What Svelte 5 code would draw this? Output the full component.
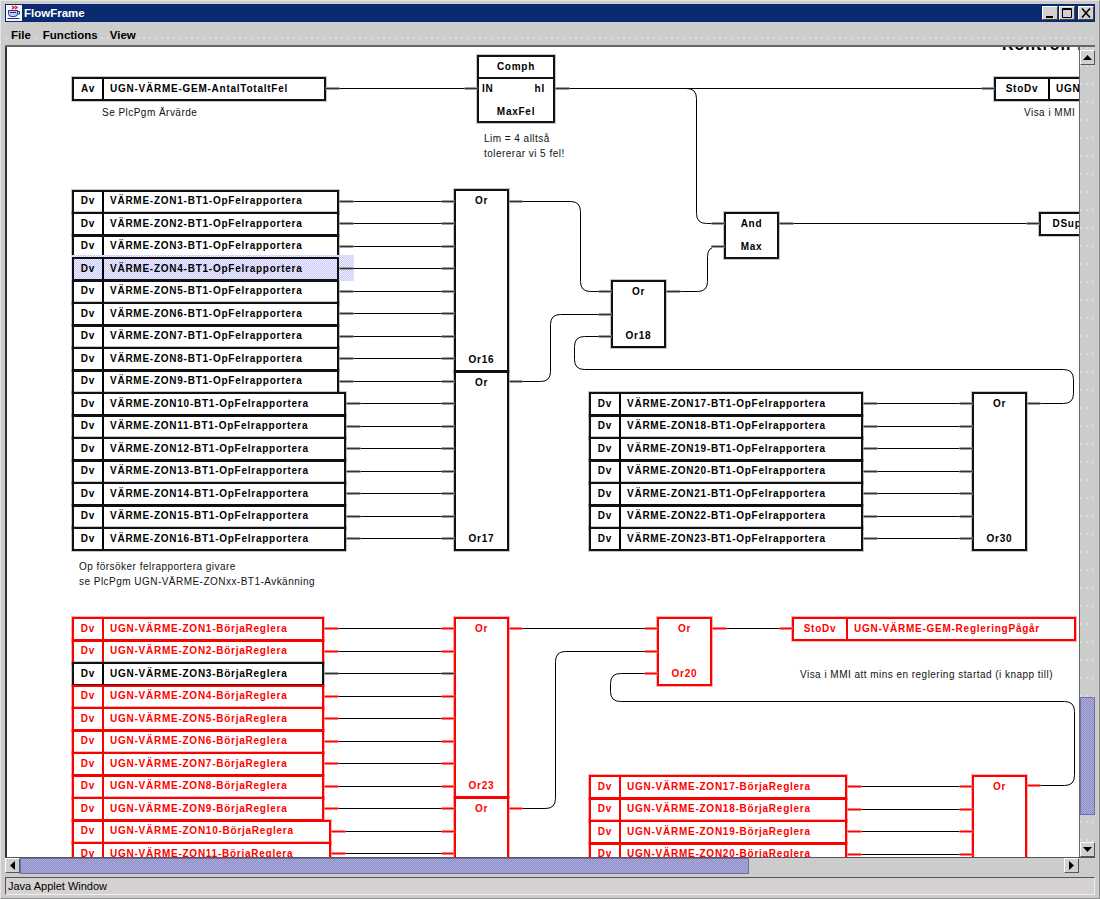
<script lang="ts">
  // the sheet is drawn in page coordinates, this is where the canvas starts
  const ox = 7;
  const oy = 47;

  type Row = { x: number; top: number; w: number; tag: string; name: string; red: boolean; sel?: boolean };

  const pitch = 22.5;
  const rows: Row[] = [];

  function addRows(x: number, top: number, w: number, from: number, to: number, fmt: (n: number) => string, red: boolean) {
    for (let n = from; n <= to; n++) {
      rows.push({ x, top: top + (n - from) * pitch, w, tag: 'Dv', name: fmt(n), red });
    }
  }

  const opFel = (n: number) => `VÄRME-ZON${n}-BT1-OpFelrapportera`;
  const borja = (n: number) => `UGN-VÄRME-ZON${n}-BörjaReglera`;

  addRows(72, 189.5, 267, 1, 9, opFel, false);
  addRows(72, 392, 274, 10, 16, opFel, false);
  addRows(589, 392, 274, 17, 23, opFel, false);
  addRows(72, 617, 252, 1, 9, borja, true);
  addRows(72, 819.5, 259, 10, 11, borja, true);
  addRows(589, 775, 258, 17, 20, borja, true);

  // N4 in the first group is selected, N3 in the red group is the inactive one
  rows[3].sel = true;
  const blackOne = rows.find((r) => r.name === 'UGN-VÄRME-ZON3-BörjaReglera');
  if (blackOne) blackOne.red = false;

  const blocks = [
    { x: 454, y: 189, w: 55, h: 183, top: 'Or', bottom: 'Or16', red: false },
    { x: 454, y: 371, w: 55, h: 180, top: 'Or', bottom: 'Or17', red: false },
    { x: 611, y: 280, w: 55, h: 68, top: 'Or', bottom: 'Or18', red: false },
    { x: 724, y: 212, w: 55, h: 47, top: 'And', bottom: 'Max', red: false },
    { x: 972, y: 392, w: 55, h: 159, top: 'Or', bottom: 'Or30', red: false },
    { x: 454, y: 617, w: 55, h: 181, top: 'Or', bottom: 'Or23', red: true },
    { x: 454, y: 797, w: 55, h: 180, top: 'Or', bottom: '', red: true },
    { x: 657, y: 617, w: 55, h: 69, top: 'Or', bottom: 'Or20', red: true },
    { x: 972, y: 775, w: 55, h: 180, top: 'Or', bottom: '', red: true }
  ];

  const cy = (r: Row) => Math.round(r.top + 11);

  // straight signal from every row into its Or block
  const stubs: { x1: number; x2: number; y: number; red: boolean }[] = [];
  const wires: string[] = [];

  for (const r of rows) {
    const right = r.x + r.w;
    const gateX = r.x === 72 ? 454 : 972;
    const y = cy(r);
    stubs.push({ x1: right, x2: right + 14, y, red: r.red });
    stubs.push({ x1: gateX - 13, x2: gateX, y, red: r.red });
    wires.push(`M${right + 14} ${y}H${gateX - 13}`);
  }

  const extraStubs = [
    { x1: 325, x2: 339, y: 88, red: false },
    { x1: 464, x2: 477, y: 88, red: false },
    { x1: 555, x2: 569, y: 88, red: false },
    { x1: 981, x2: 994, y: 88, red: false },
    { x1: 509, x2: 522, y: 201, red: false },
    { x1: 509, x2: 522, y: 381, red: false },
    { x1: 598, x2: 611, y: 291, red: false },
    { x1: 598, x2: 611, y: 314, red: false },
    { x1: 598, x2: 611, y: 336, red: false },
    { x1: 666, x2: 680, y: 291, red: false },
    { x1: 711, x2: 724, y: 223, red: false },
    { x1: 711, x2: 724, y: 246, red: false },
    { x1: 779, x2: 793, y: 223, red: false },
    { x1: 1026, x2: 1039, y: 223, red: false },
    { x1: 1027, x2: 1040, y: 403, red: false },
    { x1: 509, x2: 522, y: 628, red: true },
    { x1: 509, x2: 522, y: 808, red: true },
    { x1: 644, x2: 657, y: 628, red: true },
    { x1: 644, x2: 657, y: 651, red: true },
    { x1: 644, x2: 657, y: 673, red: true },
    { x1: 712, x2: 726, y: 628, red: true },
    { x1: 779, x2: 792, y: 628, red: true },
    { x1: 1027, x2: 1040, y: 785, red: true }
  ];

  const longWires = [
    'M339 88H464',
    'M569 88H981',
    'M686 88Q696 88 696 98V213Q696 223 706 223H711',
    'M522 201H570Q580 201 580 211V281Q580 291 590 291H598',
    'M598 314H560Q550 314 550 324V371Q550 381 540 381H522',
    'M598 336H584Q574 336 574 346V359Q574 369 584 369H1063Q1073 369 1073 379V393Q1073 403 1063 403H1040',
    'M680 291H697Q707 291 707 281V256Q707 246 717 246H711',
    'M793 223H1026',
    'M522 628H644',
    'M726 628H779',
    'M644 651H565Q555 651 555 661V798Q555 808 545 808H522',
    'M644 673H620Q610 673 610 683V691Q610 701 620 701H1064Q1074 701 1074 711V775Q1074 785 1064 785H1040'
  ];

  const allStubs = [...stubs, ...extraStubs];
</script>

<div class="window">
  <div class="titlebar">
    <svg class="appicon" width="16" height="16" viewBox="0 0 16 16">
      <rect width="16" height="16" fill="#f4f4fa" />
      <path d="M6 1l2 1.500-2 1.500M9 1l2 1.500-2 1.500" fill="none" stroke="#e01010" stroke-width="1.300" />
      <path d="M2.500 5.500h9v3q0 3-3 3h-3q-3 0-3-3z" fill="#c8ccf0" stroke="#20308c" />
      <path d="M4 7.500h6M11.500 6.500h2v2.500h-2M1.500 13.500h12" fill="none" stroke="#20308c" />
    </svg>
    <span class="title">FlowFrame</span>
    <div class="controls">
      <button class="ctl" aria-label="Minimize"><svg width="14" height="12" viewBox="0 0 14 12"><rect x="3" y="9" width="7" height="2" fill="#000" /></svg></button>
      <button class="ctl" aria-label="Maximize"><svg width="14" height="12" viewBox="0 0 14 12"><path d="M2.500 1.500h9v9h-9zM2.500 2.500h9" fill="none" stroke="#000" /></svg></button>
      <button class="ctl close" aria-label="Close"><svg width="14" height="12" viewBox="0 0 14 12"><path d="M3 1.500l8 9M11 1.500l-8 9" fill="none" stroke="#000" stroke-width="1.600" /></svg></button>
    </div>
  </div>

  <div class="menubar">
    <span>File</span>
    <span>Functions</span>
    <span>View</span>
  </div>

  <div class="work">
    <div class="canvas">
      <svg class="wires" width="1074" height="811" viewBox="{ox} {oy} 1074 811">
        <g transform="translate(0.5 0.5)">
          {#each wires as d}
            <path {d} />
          {/each}
          {#each longWires as d}
            <path {d} />
          {/each}
          {#each allStubs as s}
            <path class="stub" class:red={s.red} d="M{s.x1} {s.y}H{s.x2}" />
            <path class="stubcore" class:red={s.red} d="M{s.x1} {s.y}H{s.x2}" />
          {/each}
        </g>
      </svg>

      <span class="heading" style="left:{1002 - ox}px;top:{36 - oy}px">Kontroll f</span>

      <div class="node" style="left:{72 - ox}px;top:{77 - oy}px;width:254px">
        <span class="tag">Av</span><span class="name">UGN-VÄRME-GEM-AntalTotaltFel</span>
      </div>
      <div class="node clip" style="left:{994 - ox}px;top:{77 - oy}px;width:140px">
        <span class="tag wide">StoDv</span><span class="name">UGN-VÄRME-GEM-Larm</span>
      </div>
      <div class="node clip" style="left:{1039 - ox}px;top:{212 - oy}px;width:140px">
        <span class="tag wide">DSup</span><span class="name">UGN</span>
      </div>
      <div class="node red" style="left:{792 - ox}px;top:{617 - oy}px;width:284px">
        <span class="tag wide">StoDv</span><span class="name">UGN-VÄRME-GEM-RegleringPågår</span>
      </div>

      <!-- halo of the selected row, sits behind the row's own text -->
      <div class="halo" style="left:{71 - ox}px;top:{255 - oy}px"></div>

      {#each rows as r}
        <div
          class="node"
          class:red={r.red}
          class:sel={r.sel}
          style="left:{r.x - ox}px;top:{r.top - oy}px;width:{r.w}px"
        >
          <span class="tag">{r.tag}</span><span class="name">{r.name}</span>
        </div>
      {/each}

      {#each blocks as b}
        <div
          class="block"
          class:red={b.red}
          style="left:{b.x - ox}px;top:{b.y - oy}px;width:{b.w}px;height:{b.h}px"
        >
          <span>{b.top}</span>
          <span class="low">{b.bottom}</span>
        </div>
      {/each}

      <div class="comp" style="left:{477 - ox}px;top:{55 - oy}px">
        <div class="comp-head">Comph</div>
        <div class="comp-ports"><span>IN</span><span>hI</span></div>
        <div class="comp-foot">MaxFel</div>
      </div>

      <p class="note" style="left:{102 - ox}px;top:{105 - oy}px">Se PlcPgm Ärvärde</p>
      <p class="note" style="left:{484 - ox}px;top:{131 - oy}px">Lim = 4 alltså<br />tolererar vi 5 fel!</p>
      <p class="note" style="left:{1024 - ox}px;top:{105 - oy}px">Visa i MMI</p>
      <p class="note" style="left:{79 - ox}px;top:{559 - oy}px">Op försöker felrapportera givare<br />se PlcPgm UGN-VÄRME-ZONxx-BT1-Avkänning</p>
      <p class="note" style="left:{800 - ox}px;top:{667 - oy}px">Visa i MMI att mins en reglering startad (i knapp till)</p>
    </div>

    <div class="vscroll">
      <div class="sbtn"><svg width="9" height="5" viewBox="0 0 9 5"><path d="M4.500 0L9 5H0z" /></svg></div>
      <div class="vspace upper"></div>
      <div class="vthumb"></div>
      <div class="vspace"></div>
      <div class="sbtn"><svg width="9" height="5" viewBox="0 0 9 5"><path d="M0 0h9L4.500 5z" /></svg></div>
    </div>
  </div>

  <div class="hrow">
    <div class="hscroll">
      <div class="sbtn"><svg width="5" height="9" viewBox="0 0 5 9"><path d="M5 0v9L0 4.500z" /></svg></div>
      <div class="hthumb"></div>
      <div class="hspace"></div>
      <div class="sbtn"><svg width="5" height="9" viewBox="0 0 5 9"><path d="M0 0l5 4.500L0 9z" /></svg></div>
    </div>
    <div class="corner"></div>
  </div>

  <div class="status"><span>Java Applet Window</span></div>
</div>

<style>
  :global(body) {
    background: #c8c8c8;
  }

  .window {
    width: 1100px;
    height: 899px;
    box-sizing: border-box;
    padding: 4px 4px 3px 4px;
    display: flex;
    flex-direction: column;
    overflow: hidden;
    background: #cccccc;
    border: 1px solid #8c8c8c;
    border-top-color: #e4e4e4;
    border-left-color: #e4e4e4;
    font-family: 'Liberation Sans', Arial, sans-serif;
  }

  /* ── Window chrome ─────────────────────────────── */
  .titlebar {
    height: 18px;
    flex: none;
    display: flex;
    align-items: center;
    gap: 2px;
    padding: 0 1px;
    margin-top: -1px;
    background: repeating-conic-gradient(#0a246a 0 25%, #0c3078 0 50%) 0 0 / 2px 2px;
    color: #fff;
  }
  .appicon {
    flex: none;
  }
  .title {
    font-size: 11.500px;
    font-weight: 700;
  }
  .controls {
    margin-left: auto;
    display: flex;
    gap: 1px;
  }
  .ctl {
    width: 16px;
    height: 14px;
    padding: 0;
    display: flex;
    align-items: center;
    justify-content: center;
    background: #d4d0d0;
    border: 1px solid;
    border-color: #fff #444 #444 #fff;
  }
  .close {
    margin-left: 2px;
  }

  .menubar {
    height: 23px;
    flex: none;
    box-sizing: border-box;
    margin-top: 2px;
    display: flex;
    align-items: center;
    gap: 12px;
    padding-left: 6px;
    font-size: 11.500px;
    font-weight: 700;
    color: #000;
    background: radial-gradient(circle at 1px 1px, #d4e4d4 0.7px, transparent 0.9px) 0 13px / 6px 30px repeat-x #cccccc;
    border-bottom: 2px solid #666;
  }

  .work {
    flex: 1;
    min-height: 0;
    display: flex;
  }

  /* ── Diagram sheet ─────────────────────────────── */
  .canvas {
    position: relative;
    flex: 1;
    min-width: 0;
    overflow: hidden;
    background: #fff;
    border-left: 2px solid #333;
  }
  .wires {
    position: absolute;
    left: 0;
    top: 0;
    z-index: 2;
    fill: none;
    stroke: #000;
    stroke-width: 1;
  }
  .stub {
    stroke: #a0a0a0;
    stroke-width: 3;
  }
  .stubcore {
    stroke: #333;
    stroke-width: 1;
  }
  .stub.red {
    stroke: #ff8080;
  }
  .stubcore.red {
    stroke: #f00;
  }

  .heading {
    position: absolute;
    font-size: 16px;
    font-weight: 700;
    letter-spacing: 1px;
    color: #000;
    white-space: nowrap;
  }

  .halo {
    position: absolute;
    z-index: 1;
    width: 283px;
    height: 26px;
    background: repeating-conic-gradient(#c6c6f8 0 25%, #f0f0ff 0 50%) 0 0 / 2px 2px;
  }

  .node {
    position: absolute;
    height: 24px;
    box-sizing: border-box;
    display: flex;
    align-items: center;
    background: #fff;
    border: 2px solid #111;
    box-shadow: 0 0 0 1px rgba(0, 0, 0, 0.22);
    color: #000;
    font-size: 10px;
    font-weight: 700;
    letter-spacing: 0.75px;
    white-space: nowrap;
  }
  .node.red {
    border-color: #f00;
    box-shadow: 0 0 0 1px rgba(255, 0, 0, 0.3);
    color: #f00;
  }
  .node.sel {
    z-index: 1;
    background: transparent;
    box-shadow: none;
  }
  .tag {
    flex: none;
    width: 30px;
    height: 100%;
    padding-bottom: 2px;
    display: flex;
    align-items: center;
    justify-content: center;
    border-right: 2px solid currentColor;
    box-sizing: border-box;
  }
  .tag.wide {
    width: 54px;
  }
  .name {
    padding-left: 6px;
    padding-bottom: 2px;
  }

  .block {
    position: absolute;
    z-index: 1;
    box-sizing: border-box;
    display: flex;
    flex-direction: column;
    justify-content: space-between;
    background: #fff;
    border: 2px solid #111;
    box-shadow: 0 0 0 1px rgba(0, 0, 0, 0.22);
    color: #000;
    font-size: 10px;
    font-weight: 700;
    letter-spacing: 0.75px;
    text-align: center;
  }
  .block span {
    height: 21px;
    line-height: 19px;
  }
  .block .low {
    line-height: 22px;
  }
  .block.red {
    border-color: #f00;
    box-shadow: 0 0 0 1px rgba(255, 0, 0, 0.3);
    color: #f00;
  }

  .comp {
    position: absolute;
    z-index: 1;
    width: 78px;
    height: 68px;
    box-sizing: border-box;
    display: flex;
    flex-direction: column;
    background: #fff;
    border: 2px solid #111;
    box-shadow: 0 0 0 1px rgba(0, 0, 0, 0.22);
    font-size: 10px;
    font-weight: 700;
    letter-spacing: 0.75px;
  }
  .comp-head {
    height: 21px;
    line-height: 20px;
    text-align: center;
    border-bottom: 2px solid #111;
  }
  .comp-ports {
    height: 21px;
    line-height: 20px;
    display: flex;
    justify-content: space-between;
    padding: 0 8px 0 3px;
  }
  .comp-foot {
    flex: 1;
    line-height: 25px;
    text-align: center;
  }

  .note {
    position: absolute;
    margin: 0;
    font-size: 10px;
    line-height: 15px;
    letter-spacing: 0.47px;
    color: #111;
    white-space: nowrap;
  }

  /* ── Scrollbars ────────────────────────────────── */
  .vscroll {
    width: 15px;
    flex: none;
    box-sizing: content-box;
    padding-top: 3px;
    display: flex;
    flex-direction: column;
    background: radial-gradient(circle at 1px 1px, #d4e4d4 0.7px, transparent 0.9px) 0 0 / 6px 18px #cccccc;
    border-left: 1px solid #666;
  }
  .sbtn {
    width: 15px;
    height: 15px;
    flex: none;
    box-sizing: border-box;
    display: flex;
    align-items: center;
    justify-content: center;
    background: #d0d0d0;
    border: 1px solid;
    border-color: #fff #555 #555 #fff;
  }
  .vspace {
    flex: 1;
    min-height: 0;
  }
  .vspace.upper {
    flex: none;
    height: 632px;
  }
  .vthumb {
    height: 118px;
    flex: none;
    background: repeating-conic-gradient(#9090c4 0 25%, #aaaadc 0 50%) 0 0 / 2px 2px;
    border: 1px solid #7070a8;
    box-sizing: border-box;
  }

  .hrow {
    height: 17px;
    flex: none;
    display: flex;
    border-top: 1px solid #555;
    box-sizing: border-box;
  }
  .hscroll {
    flex: 1;
    display: flex;
    min-width: 0;
    background: #cccccc;
  }
  .hthumb {
    width: 729px;
    flex: none;
    background: repeating-conic-gradient(#9090c4 0 25%, #aaaadc 0 50%) 0 0 / 2px 2px;
    border: 1px solid #7070a8;
    box-sizing: border-box;
  }
  .hspace {
    flex: 1;
  }
  .corner {
    width: 16px;
    flex: none;
    background: #cccccc;
  }

  .status {
    height: 18px;
    flex: none;
    margin-top: 3px;
    box-sizing: border-box;
    display: flex;
    align-items: center;
    padding-left: 2px;
    font-size: 11px;
    color: #000;
    background: repeating-conic-gradient(#cfcfcf 0 25%, #dcd4d4 0 50%) 0 0 / 2px 2px;
    border: 1px solid;
    border-color: #555 #eee #eee #555;
  }
</style>
